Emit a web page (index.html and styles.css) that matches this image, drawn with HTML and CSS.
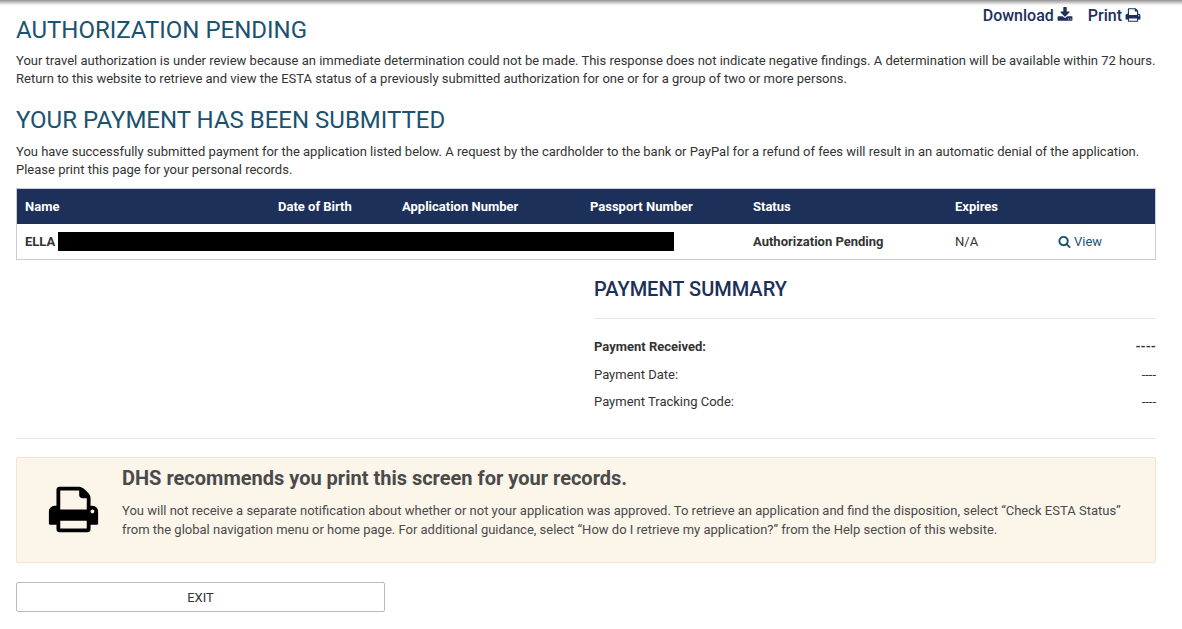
FILE: index.html
```html
<!DOCTYPE html>
<html lang="en">
<head>
<meta charset="utf-8">
<title>ESTA Authorization Pending</title>
<link rel="stylesheet" href="styles.css">
</head>
<body>
<div class="top-shadow"></div>
<main class="page">
  <div class="actions">
    <a class="action">Download <svg class="action-icon" viewBox="0 0 1792 1792"><path d="M1344 1344q0-26-19-45t-45-19-45 19-19 45 19 45 45 19 45-19 19-45zm256 0q0-26-19-45t-45-19-45 19-19 45 19 45 45 19 45-19 19-45zm128-224v320q0 40-28 68t-68 28h-1472q-40 0-68-28t-28-68v-320q0-40 28-68t68-28h465l135 136q58 56 136 56t136-56l136-136h464q40 0 68 28t28 68zm-325-569q17 41-14 70l-448 448q-18 19-45 19t-45-19l-448-448q-31-29-14-70 17-39 59-39h256v-448q0-26 19-45t45-19h256q26 0 45 19t19 45v448h256q42 0 59 39z"/></svg></a>
    <a class="action">Print <svg class="action-icon" viewBox="0 0 1792 1792"><path d="M448 1536h896v-256h-896v256zm0-640h896v-384h-160q-40 0-68-28t-28-68v-160h-640v640zm1152 64q0-26-19-45t-45-19-45 19-19 45 19 45 45 19 45-19 19-45zm128 0v416q0 13-9.5 22.5t-22.5 9.5h-224v160q0 40-28 68t-68 28h-960q-40 0-68-28t-28-68v-160h-224q-13 0-22.5-9.5t-9.5-22.5v-416q0-79 56.5-135.5t135.5-56.5h64v-544q0-40 28-68t68-28h672q40 0 88 20t76 48l152 152q28 28 48 76t20 88v256h64q79 0 135.5 56.5t56.5 135.5z"/></svg></a>
  </div>
  <h1 class="title title-first">AUTHORIZATION PENDING</h1>
  <p class="copy">Your travel authorization is under review because an immediate determination could not be made. This response does not indicate negative findings. A determination will be available within 72 hours. Return to this website to retrieve and view the ESTA status of a previously submitted authorization for one or for a group of two or more persons.</p>
  <h1 class="title title-second">YOUR PAYMENT HAS BEEN SUBMITTED</h1>
  <p class="copy copy-second">You have successfully submitted payment for the application listed below. A request by the cardholder to the bank or PayPal for a refund of fees will result in an automatic denial of the application. Please print this page for your personal records.</p>

  <div class="table">
    <div class="row row-head">
      <span>Name</span><span>Date of Birth</span><span>Application Number</span><span>Passport Number</span><span>Status</span><span>Expires</span><span></span>
    </div>
    <div class="row row-body">
      <span class="strong">ELLA</span><span></span><span></span><span></span><span class="strong">Authorization Pending</span><span>N/A</span>
      <a class="view"><svg class="view-icon" viewBox="0 0 1792 1792"><path d="M1216 832q0-185-131.5-316.5t-316.5-131.5-316.5 131.5-131.5 316.5 131.5 316.5 316.5 131.5 316.5-131.5 131.5-316.5zm512 832q0 52-38 90t-90 38q-54 0-90-38l-343-342q-179 124-399 124-143 0-273.5-55.5t-225-150-150-225-55.5-273.5 55.5-273.5 150-225 225-150 273.5-55.5 273.5 55.5 225 150 150 225 55.5 273.5q0 220-124 399l343 343q37 37 37 90z"/></svg> View</a>
      <div class="redaction"></div>
    </div>
  </div>

  <section class="summary">
    <h2 class="summary-title">PAYMENT SUMMARY</h2>
    <div class="summary-row summary-row-strong"><span>Payment Received:</span><span>----</span></div>
    <div class="summary-row"><span>Payment Date:</span><span>----</span></div>
    <div class="summary-row"><span>Payment Tracking Code:</span><span>----</span></div>
  </section>

  <hr class="divider">

  <section class="notice">
    <svg class="notice-icon" viewBox="0 0 1792 1792"><path d="M448 1536h896v-256h-896v256zm0-640h896v-384h-160q-40 0-68-28t-28-68v-160h-640v640zm1152 64q0-26-19-45t-45-19-45 19-19 45 19 45 45 19 45-19 19-45zm128 0v416q0 13-9.5 22.5t-22.5 9.5h-224v160q0 40-28 68t-68 28h-960q-40 0-68-28t-28-68v-160h-224q-13 0-22.5-9.5t-9.5-22.5v-416q0-79 56.5-135.5t135.5-56.5h64v-544q0-40 28-68t68-28h672q40 0 88 20t76 48l152 152q28 28 48 76t20 88v256h64q79 0 135.5 56.5t56.5 135.5z"/></svg>
    <div class="notice-body">
      <h3 class="notice-title">DHS recommends you print this screen for your records.</h3>
      <p class="notice-text">You will not receive a separate notification about whether or not your application was approved. To retrieve an application and find the disposition, select “Check ESTA Status” from the global navigation menu or home page. For additional guidance, select “How do I retrieve my application?” from the Help section of this website.</p>
    </div>
  </section>

  <button class="exit" type="button">EXIT</button>
</main>
</body>
</html>
```

FILE: styles.css
```css
* { box-sizing: border-box; }
html, body { margin: 0; padding: 0; background: #fff; }
body {
  font-family: Roboto, "Liberation Sans", sans-serif;
  color: #333;
  font-size: 13px;
  overflow: hidden;
  height: 629px;
}
.top-shadow {
  height: 6px;
  background: linear-gradient(#929292, #c4c4c4 40%, #f2f2f2 75%, #fff);
}
.page {
  position: relative;
  padding: 0 26px 0 16px;
}
.actions {
  position: absolute;
  top: -1px;
  right: 41px;
  display: flex;
  gap: 15px;
}
.action {
  color: #1c3059;
  font-size: 16px;
  font-weight: 500;
  line-height: 22px;
  display: flex;
  align-items: center;
  gap: 3px;
}
.action-icon { width: 16px; height: 16px; margin-bottom: 3px; fill: #1c3059; }
.title {
  margin: 0;
  color: #1a5270;
  font-size: 24px;
  font-weight: 400;
  line-height: 28px;
}
.title-first { padding-top: 10px; }
.title-second { margin-top: 18px; }
.copy {
  margin: 8px 0 0;
  line-height: 18px;
  width: 1140px;
}
.copy-second { margin-top: 9px; }
.table {
  margin-top: 9px;
  width: 1140px;
  border: 1px solid #ccc;
}
.row {
  position: relative;
  display: grid;
  grid-template-columns: 253px 124px 188px 163px 202px 103px 1fr;
  align-items: center;
  padding-left: 8px;
}
.row-head {
  height: 35px;
  background: #1c3059;
  color: #fff;
  font-weight: 700;
}
.row-body { height: 35px; }
.strong { font-weight: 700; }
.view { color: #1a5270; display: flex; align-items: center; gap: 3px; }
.view-icon { width: 13px; height: 13px; fill: #1a5270; }
.redaction {
  position: absolute;
  left: 41px;
  top: 8px;
  width: 616px;
  height: 19px;
  background: #000;
}
.summary {
  margin-left: 578px;
  width: 562px;
}
.summary-title {
  margin: 0;
  padding: 15px 0 15px;
  height: 59px;
  border-bottom: 1px solid #e5e5e5;
  color: #1c3059;
  font-size: 20px;
  font-weight: 500;
  line-height: 28px;
}
.summary-row {
  display: flex;
  justify-content: space-between;
  height: 27.5px;
  align-items: center;
}
.summary-row:first-of-type { margin-top: 14px; }
.summary-row-strong { font-weight: 700; }
.divider {
  margin: 22px 0 0;
  width: 1140px;
  border: 0;
  border-top: 1px solid #e5e5e5;
}
.notice {
  margin-top: 18px;
  width: 1140px;
  height: 106px;
  display: flex;
  background: #fcf5ea;
  border: 1px solid #fae3cd;
  border-radius: 2px;
}
.notice-icon {
  width: 53px;
  height: 53px;
  margin: 25px 0 0 30px;
  fill: #000;
  flex: none;
}
.notice-body { margin-left: 22px; width: 1010px; }
.notice-title {
  margin: 8px 0 0;
  color: #4a4a4a;
  font-size: 20px;
  font-weight: 700;
  line-height: 24px;
}
.notice-text {
  margin: 11px 0 0;
  color: #4a4a4a;
  line-height: 19px;
}
.exit {
  display: block;
  margin-top: 19px;
  padding: 2px 0 0;
  width: 369px;
  height: 30px;
  background: #fff;
  border: 1px solid #bbb;
  border-radius: 2px;
  color: #333;
  font-family: inherit;
  font-size: 13px;
}
```
